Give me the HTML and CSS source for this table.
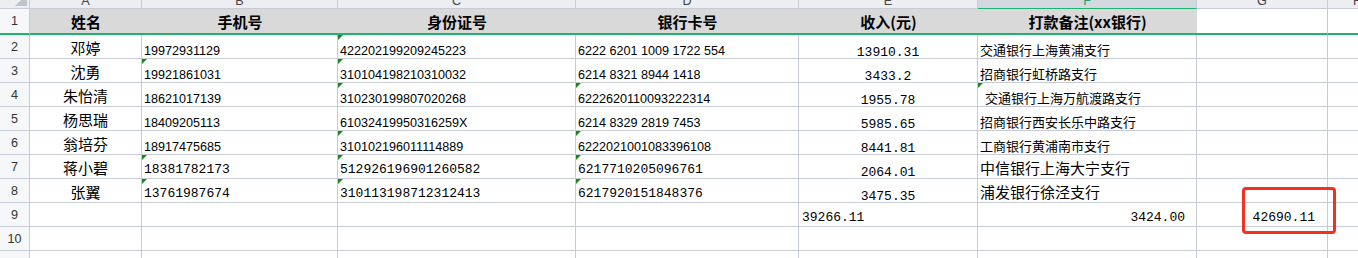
FILE: index.html
```html
<!DOCTYPE html>
<html lang="zh-CN">
<head>
<meta charset="utf-8">
<title>Sheet</title>
<link rel="stylesheet" href="styles.css">
</head>
<body>
<div class="wrap">
  <div class="sheet">
    <!-- column header row -->
    <div class="ch corner"><svg width="30" height="9" viewBox="0 0 30 9"><polygon points="15,6 27,6 27,0 21,0" fill="#bfc3ca"/></svg></div>
    <div class="ch"><span>A</span></div>
    <div class="ch"><span>B</span></div>
    <div class="ch"><span>C</span></div>
    <div class="ch"><span>D</span></div>
    <div class="ch"><span>E</span></div>
    <div class="ch ch-sel"><span>F</span></div>
    <div class="ch"><span>G</span></div>
    <div class="ch"><span>H</span></div>

    <!-- row 1 -->
    <div class="rh rh-first">1</div>
    <div class="hd">姓名</div>
    <div class="hd">手机号</div>
    <div class="hd">身份证号</div>
    <div class="hd">银行卡号</div>
    <div class="hd">收入(元)</div>
    <div class="hd">打款备注(xx银行)</div>
    <div class="c c-first"></div>
    <div class="c c-first"></div>

    <!-- row 2 -->
    <div class="rh">2</div>
    <div class="c nm">邓婷</div>
    <div class="c n">19972931129</div>
    <div class="c n tri">422202199209245223</div>
    <div class="c n">6222 6201 1009 1722 554</div>
    <div class="c e">13910.31</div>
    <div class="c t">交通银行上海黄浦支行</div>
    <div class="c"></div>
    <div class="c"></div>

    <!-- row 3 -->
    <div class="rh">3</div>
    <div class="c nm">沈勇</div>
    <div class="c n tri">19921861031</div>
    <div class="c n tri">310104198210310032</div>
    <div class="c n">6214 8321 8944 1418</div>
    <div class="c e">3433.2</div>
    <div class="c t">招商银行虹桥路支行</div>
    <div class="c"></div>
    <div class="c"></div>

    <!-- row 4 -->
    <div class="rh">4</div>
    <div class="c nm">朱怡清</div>
    <div class="c n">18621017139</div>
    <div class="c n tri">310230199807020268</div>
    <div class="c n tri">6222620110093222314</div>
    <div class="c e">1955.78</div>
    <div class="c t t-indent tri">交通银行上海万航渡路支行</div>
    <div class="c"></div>
    <div class="c"></div>

    <!-- row 5 -->
    <div class="rh">5</div>
    <div class="c nm">杨思瑞</div>
    <div class="c n">18409205113</div>
    <div class="c n">61032419950316259X</div>
    <div class="c n">6214 8329 2819 7453</div>
    <div class="c e">5985.65</div>
    <div class="c t">招商银行西安长乐中路支行</div>
    <div class="c"></div>
    <div class="c"></div>

    <!-- row 6 -->
    <div class="rh">6</div>
    <div class="c nm">翁培芬</div>
    <div class="c n">18917475685</div>
    <div class="c n tri">310102196011114889</div>
    <div class="c n tri">6222021001083396108</div>
    <div class="c e">8441.81</div>
    <div class="c t">工商银行黄浦南市支行</div>
    <div class="c"></div>
    <div class="c"></div>

    <!-- row 7 -->
    <div class="rh">7</div>
    <div class="c nm">蒋小碧</div>
    <div class="c m tri">18381782173</div>
    <div class="c m tri">512926196901260582</div>
    <div class="c m tri">6217710205096761</div>
    <div class="c e">2064.01</div>
    <div class="c t t-lg">中信银行上海大宁支行</div>
    <div class="c"></div>
    <div class="c"></div>

    <!-- row 8 -->
    <div class="rh">8</div>
    <div class="c nm">张翼</div>
    <div class="c m tri">13761987674</div>
    <div class="c m tri">310113198712312413</div>
    <div class="c m tri">6217920151848376</div>
    <div class="c e">3475.35</div>
    <div class="c t t-lg">浦发银行徐泾支行</div>
    <div class="c"></div>
    <div class="c"></div>

    <!-- row 9 -->
    <div class="rh">9</div>
    <div class="c"></div>
    <div class="c"></div>
    <div class="c"></div>
    <div class="c"></div>
    <div class="c m sum-l">39266.11</div>
    <div class="c m sum-r">3424.00</div>
    <div class="c m sum-g">42690.11</div>
    <div class="c"></div>

    <!-- row 10 -->
    <div class="rh">10</div>
    <div class="c"></div>
    <div class="c"></div>
    <div class="c"></div>
    <div class="c"></div>
    <div class="c"></div>
    <div class="c"></div>
    <div class="c"></div>
    <div class="c"></div>

    <!-- row 11 -->
    <div class="rh">11</div>
    <div class="c"></div>
    <div class="c"></div>
    <div class="c"></div>
    <div class="c"></div>
    <div class="c"></div>
    <div class="c"></div>
    <div class="c"></div>
    <div class="c"></div>
  </div>
  <div class="mark"></div>
</div>
</body>
</html>
```

FILE: styles.css
```css
html, body {
  margin: 0;
  padding: 0;
  background: #ffffff;
  overflow: hidden;
}

.wrap {
  position: relative;
  width: 1358px;
  height: 258px;
  overflow: hidden;
}

.sheet {
  display: grid;
  grid-template-columns: 30px 112px 196px 238px 223px 179px 219px 131px 60px;
  grid-template-rows: 9px 26px repeat(10, 24px);
  width: 1388px;
  font-family: "Liberation Sans", Arial, sans-serif;
  color: #000;
}

/* column header */
.ch {
  background: #eceef2;
  border-right: 1px solid #c6cbd6;
  border-bottom: 1px solid #c6cbd6;
  display: flex;
  justify-content: center;
  align-items: flex-start;
  overflow: hidden;
  font-size: 12.6px;
  color: #444;
}
.ch span {
  line-height: 14px;
  margin-top: -6px;
}
.ch-sel {
  background: #d4d8df;
  border-bottom: 1px solid #1fb36b;
  color: #1fa463;
}
.corner {
  display: block;
  background: #eceef2;
}
.corner svg { display: block; }

/* row header */
.rh {
  background: #f6f7f9;
  border-right: 1px solid #c6cbd6;
  border-bottom: 1px solid #c6cbd6;
  display: flex;
  justify-content: center;
  align-items: center;
  font-size: 12.6px;
  color: #333;
  overflow: hidden;
}
.rh-first {
  border-bottom: 2px solid #1fb36b;
}

/* row 1 header cells */
.hd {
  background: #d9d9d9;
  border-bottom: 2px solid #1fb36b;
  display: flex;
  justify-content: center;
  align-items: center;
  font-family: "Noto Sans CJK SC", sans-serif;
  font-weight: bold;
  font-size: 15px;
  line-height: 15px;
  white-space: nowrap;
  overflow: hidden;
}

/* normal cells */
.c {
  position: relative;
  border-right: 1px solid #c6cbd6;
  border-bottom: 1px solid #c6cbd6;
  display: flex;
  align-items: flex-end;
  white-space: nowrap;
  overflow: hidden;
}
.c-first {
  border-bottom: 2px solid #1fb36b;
}

/* names */
.nm {
  justify-content: center;
  font-family: "Noto Sans CJK SC", sans-serif;
  font-size: 15px;
  line-height: 15px;
  padding-bottom: 3px;
}

/* Arial style digits */
.n {
  font-family: "Liberation Sans", Arial, sans-serif;
  font-size: 12.6px;
  line-height: 14px;
  padding-left: 2px;
}

/* monospace digits */
.m {
  font-family: "Liberation Mono", "Courier New", monospace;
  font-size: 13px;
  line-height: 11px;
  padding-left: 2px;
  padding-bottom: 3px;
}

/* income column */
.e {
  justify-content: center;
  font-family: "Liberation Mono", "Courier New", monospace;
  font-size: 13px;
  line-height: 11px;
}

/* remarks */
.t {
  font-family: "Noto Sans CJK SC", sans-serif;
  font-size: 13px;
  line-height: 13px;
  padding-left: 2px;
  padding-bottom: 2px;
}
.t-indent {
  padding-left: 7px;
}
.t-lg {
  font-size: 15px;
  line-height: 15px;
  padding-bottom: 3px;
}

/* totals */
.sum-l {
  padding-left: 3px;
}
.sum-r {
  justify-content: flex-end;
  padding-right: 11px;
}
.sum-g {
  justify-content: flex-end;
  padding-right: 12px;
}

/* green error indicator triangle */
.tri::before {
  content: "";
  position: absolute;
  left: 0;
  top: 0;
  width: 0;
  height: 0;
  border-top: 5px solid #17891a;
  border-right: 5px solid transparent;
}

/* red annotation box */
.mark {
  position: absolute;
  left: 1242px;
  top: 187px;
  width: 94px;
  height: 47px;
  box-sizing: border-box;
  border: 3px solid #f4311f;
  border-radius: 4px;
}
```
